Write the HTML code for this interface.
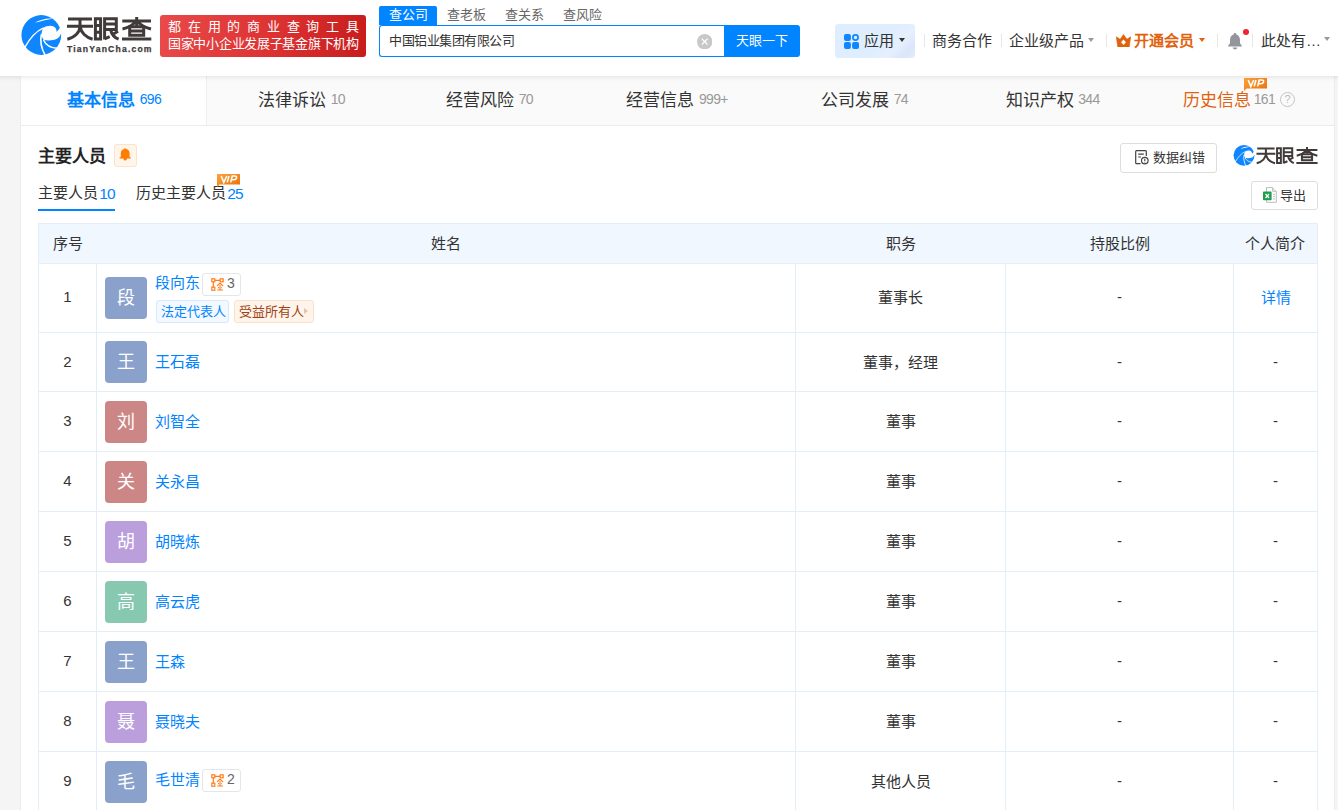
<!DOCTYPE html>
<html lang="zh-CN">
<head>
<meta charset="utf-8">
<title>中国铝业集团有限公司 - 天眼查</title>
<style>
*{box-sizing:border-box;margin:0;padding:0}
html,body{width:1338px;height:810px;overflow:hidden}
body{background:#f5f5f5;font-family:"Liberation Sans",sans-serif;color:#333;font-size:15px;font-weight:350;position:relative}
a{color:inherit;text-decoration:none}
i{font-style:normal}
.abs{position:absolute;white-space:nowrap;overflow:hidden}
.j{display:inline-block;text-align:justify;text-align-last:justify;white-space:nowrap}
.d{letter-spacing:-.8px}

/* ---------- header ---------- */
#hd{position:absolute;left:-20px;top:0;width:1378px;height:76px;background:#fff;box-shadow:0 1px 5px rgba(0,0,0,.10);z-index:5}
#hdi{position:absolute;left:20px;top:0;width:1338px;height:76px}
#logo{position:absolute;left:20px;top:14px;width:134px;height:42px}
#slogan{position:absolute;left:160px;top:15px;width:206px;height:42px;border-radius:3px;background:linear-gradient(100deg,#e94a4a 0%,#dc3232 55%,#c81c1c 100%);color:#fff;overflow:hidden}
#slogan div{position:absolute;white-space:nowrap;font-size:13px;line-height:16px;height:16px;text-align:justify;text-align-last:justify}
#stabs{position:absolute;left:379px;top:6px;height:19px}
#stabs a{position:absolute;top:0;height:19px;line-height:18px;font-size:13px;color:#666;white-space:nowrap;text-align:justify;text-align-last:justify}
#stabs a.on{background:#0084ff;color:#fff;border-radius:2px 2px 0 0;padding:0 9.5px}
#sbox{position:absolute;left:379px;top:25px;width:346px;height:32px;border:1px solid #0084ff;border-right:0;border-radius:3px 0 0 3px;background:#fff}
#sbox span.v{position:absolute;left:9px;top:0;line-height:30px;height:30px;font-size:13px;color:#333;white-space:nowrap}
#sclr{position:absolute;left:317px;top:7.5px;width:15.4px;height:15.4px}
#sbtn{position:absolute;left:724px;top:25px;width:76px;height:32px;background:#0084ff;color:#fff;font-size:13px;line-height:32px;text-align:center;border-radius:0 3px 3px 0;white-space:nowrap;overflow:hidden}
.nav{position:absolute;top:24px;height:33px;line-height:33px;font-size:15px;color:#333;white-space:nowrap}
.sep{position:absolute;top:34px;width:1px;height:13px;background:#e6e6e6}
.caret{position:absolute;width:0;height:0;border-left:3.5px solid transparent;border-right:3.5px solid transparent;border-top:4px solid #999}

/* ---------- tab bar ---------- */
#tabs{position:absolute;left:20px;top:76px;width:1315px;height:50px;background:#fafafa}
#tabs .t{position:absolute;top:0;height:49px;line-height:50px;padding-left:1px;text-align:center;font-size:17px;color:#333;white-space:nowrap}
#tabs .t .n{font-size:14px;color:#999;letter-spacing:-.7px;position:relative;top:-2px}
#tabs .t.on{background:#fff;color:#0084ff;font-weight:bold;box-shadow:inset -1px 0 0 #efefef}
#tabs .t.on .n{color:#0084ff;font-weight:350}
#tabs .t.vip{color:#e0620d}
#tabs .ln{position:absolute;background:#ececec}
.vip{position:absolute;width:23px;height:13px}
.q{position:absolute;width:15px;height:15px;border:1px solid #c4c4c4;border-radius:50%;color:#bbb;font-size:11px;line-height:13px;text-align:center}

/* ---------- card ---------- */
#card{position:absolute;left:20px;top:126px;width:1315px;height:700px;background:#fff;box-shadow:inset 1px 0 0 #ececec,inset -1px 0 0 #ececec}
#tt{position:absolute;left:18px;top:19px;font-size:17px;line-height:24px;height:24px;font-weight:bold;color:#222;white-space:nowrap}
#bell2{position:absolute;left:94px;top:18px;width:23px;height:23px;border:1px solid #ffe3c8;background:#fff5ea;border-radius:3px}
#fix{position:absolute;left:1100px;top:17px;width:97px;height:30px;border:1px solid #ddd;border-radius:3px;font-size:13px;line-height:28px;color:#333;white-space:nowrap}
#exp{position:absolute;left:1231px;top:55px;width:67px;height:29px;border:1px solid #ddd;border-radius:3px;font-size:13px;line-height:27px;color:#333;white-space:nowrap}
.st{position:absolute;top:57px;height:20px;line-height:20px;font-size:15px;color:#333;white-space:nowrap}
.st b{font-weight:inherit;color:#0084ff;letter-spacing:-.7px;font-size:15.5px;margin-left:-3px;position:relative;top:.5px}
#stline{position:absolute;left:18px;top:83px;width:77px;height:2px;background:#0084ff}

/* ---------- table ---------- */
#tb{position:absolute;left:18px;top:97px;width:1279px;border-collapse:collapse;table-layout:fixed;font-size:15px;color:#333}
#tb th{height:40px;background:#f0f7ff;font-weight:inherit;text-align:center;border:1px solid #e4eef6;border-left:0;border-right:0;white-space:nowrap;padding:0 0 2px}
#tb th:first-child{border-left:1px solid #e4eef6}
#tb th:last-child{border-right:1px solid #e4eef6}
#tb td{height:60px;border:1px solid #e4eef6;text-align:center;white-space:nowrap;padding:0 0 2px;position:relative}
#tb tr.r1 td{height:69px;padding-bottom:3px}
#tb tr.r2 td{height:59px}
#tb td.nm{text-align:left}
.av{position:absolute;left:8px;top:9px;width:42px;height:42px;border-radius:4px;color:#fff;font-size:18px;line-height:42px;text-align:center;overflow:hidden}
.pn{position:absolute;left:58px;top:19px;height:22px;line-height:22px;color:#0084ff;font-size:15px;white-space:nowrap}
.c1{background:#8aa1cc}.c2{background:#cc8686}.c3{background:#bb9edc}.c4{background:#87c9b0}
.cnt{position:absolute;height:23px;border:1px solid #e3e7ec;border-radius:3px;background:#fff;font-size:14px;line-height:21px;color:#666;white-space:nowrap}
.cnt svg{position:absolute;left:8px;top:4px}
.cnt span{position:absolute;left:24px;top:-1px}
.tag{position:absolute;top:36px;height:23px;border-radius:3px;font-size:13px;line-height:21px;white-space:nowrap}
</style>
</head>
<body>
<div id="hd"><div id="hdi">
  <div id="logo"><svg width="134" height="42" viewBox="0 0 134 42" style="position:absolute;left:0;top:0;overflow:visible">
    <g transform="translate(-4,-4) scale(0.0617284)">
      <circle cx="410" cy="405" r="322" fill="#0d86ff"/>
      <path d="M440,290 C500,250 600,240 640,292 C652,310 660,335 657,358 C670,338 692,318 708,292 L770,292 L770,384 L728,384 C700,470 620,505 450,488 C425,450 415,420 412,400 C415,350 425,320 440,290 Z" fill="#fff"/>
      <path d="M446,288 C330,340 220,460 140,610" fill="none" stroke="#fff" stroke-width="22"/>
      <path d="M412,392 C385,500 410,620 475,740" fill="none" stroke="#fff" stroke-width="26"/>
      <path d="M445,485 C480,560 560,615 670,618" fill="none" stroke="#fff" stroke-width="24"/>
      <path d="M303,208 C390,150 520,125 594,140 C500,152 400,182 303,208Z" fill="#fff"/>
    </g>
    <g fill="none" stroke="#403a3a" stroke-width="3.0">
      <path d="M48,5 H72 M47,12.3 H73 M60,5 V12.3 C60,18 55,23.5 47.3,25.2 M60.2,13 C61,18.5 66,23.5 72.6,25.2"/>
      <path d="M75.4,4.7 H80.6 V25 H75.4 Z M75.4,11.4 H80.6 M75.4,18.2 H80.6"/>
      <path d="M84.6,25.6 V4.7 H96.3 V15.4 H84.6 M84.6,10 H96.3 M90.5,15.4 C91.5,20 94,23.5 98.6,25.2 M98,17.2 L92.5,20.5 M84.6,24.8 L89.7,22.6"/>
      <path d="M102.3,7 H131 M116.7,3 V12 M115.5,8 C112,11.5 107,14 102.5,15 M117.9,8 C121.5,11.5 126.5,14 131,15"/>
      <path d="M109.7,12.8 H123.7 V21.2 H109.7 Z M109.7,17 H123.7 M102,25 H131.3"/>
    </g>
    <text x="47" y="37.6" font-family="Liberation Sans, sans-serif" font-weight="bold" font-size="8.6" fill="#403a3a" stroke="#403a3a" stroke-width="0.25" textLength="84.5" lengthAdjust="spacing">TianYanCha.com</text>
  </svg></div>
  <div id="slogan">
    <div style="left:8px;top:4px;width:191px">都在用的商业查询工具</div>
    <div style="left:8px;top:21px;width:190.5px;letter-spacing:-.5px">国家中小企业发展子基金旗下机构</div>
  </div>
  <div id="stabs">
    <a class="on" style="left:0;width:58px">查公司</a>
    <a style="left:68px;width:39px">查老板</a>
    <a style="left:126px;width:39px">查关系</a>
    <a style="left:184px;width:39px">查风险</a>
  </div>
  <div id="sbox"><span class="v"><span class="j" style="width:125.5px;letter-spacing:-0.45px">中国铝业集团有限公司</span></span><svg id="sclr" viewBox="0 0 16 16"><circle cx="8" cy="8" r="8" fill="#c8c8c8"/><path d="M5,5 L11,11 M11,5 L5,11" stroke="#fff" stroke-width="1.3"/></svg></div>
  <div id="sbtn"><span class="j" style="width:52px">天眼一下</span></div>
  <div class="abs" style="left:835px;top:24px;width:80px;height:34px;border-radius:3px;background:linear-gradient(135deg,#dfeeff 0%,#dfeeff 58%,#e6effd 74%,#dce6fb 88%,#e2ecfd 100%)"></div>
  <svg class="abs" style="left:844px;top:33.6px" width="15" height="15" viewBox="0 0 15 15"><rect x="0" y="0" width="6.9" height="6.9" rx="2" fill="#0d86ff"/><rect x="0" y="8.1" width="6.9" height="6.9" rx="2" fill="#0d86ff"/><rect x="8.1" y="8.1" width="6.9" height="6.9" rx="2" fill="#0d86ff"/><circle cx="11.5" cy="3.5" r="2.6" fill="none" stroke="#0d86ff" stroke-width="1.7"/></svg>
  <div class="nav" style="left:864px"><span class="j" style="width:30px">应用</span></div>
  <i class="caret" style="left:899px;top:38px;border-top-color:#333"></i>
  <i class="sep" style="left:924px"></i>
  <div class="nav" style="left:932px"><span class="j" style="width:60px">商务合作</span></div>
  <i class="sep" style="left:1001px"></i>
  <div class="nav" style="left:1009px"><span class="j" style="width:75px">企业级产品</span></div>
  <i class="caret" style="left:1088px;top:38px"></i>
  <i class="sep" style="left:1106px"></i>
  <svg class="abs" style="left:1116px;top:33.5px" width="15" height="13.9" viewBox="0 0 14 13"><path d="M0.3,2.6 L3.8,5 L7,0.5 L10.2,5 L13.7,2.6 L12.3,12.3 H1.7 Z" fill="#e0620d" stroke="#e0620d" stroke-width="0.6" stroke-linejoin="round"/><path d="M7,5.2 L9.3,7.8 L7,10.4 L4.7,7.8Z" fill="#fff"/></svg>
  <div class="nav" style="left:1134px;color:#e0620d;font-weight:bold"><span class="j" style="width:60px">开通会员</span></div>
  <i class="caret" style="left:1199px;top:38px;border-top-color:#e0620d"></i>
  <i class="sep" style="left:1217px"></i>
  <svg class="abs" style="left:1227px;top:32px" width="16" height="17.8" viewBox="0 0 18 20"><path d="M9,1.2 C9.9,1.2 10.5,1.8 10.5,2.7 C13.2,3.5 14.6,5.8 14.6,8.8 V12.6 L16.6,15.2 V16.2 H1.4 V15.2 L3.4,12.6 V8.8 C3.4,5.8 4.8,3.5 7.5,2.7 C7.5,1.8 8.1,1.2 9,1.2 Z" fill="#92959b"/><path d="M6.4,17.5 H11.6 C11.3,18.9 10.3,19.6 9,19.6 C7.7,19.6 6.7,18.9 6.4,17.5Z" fill="#92959b"/></svg>
  <i class="abs" style="left:1243px;top:29px;width:6px;height:6px;border-radius:50%;background:#f5222d"></i>
  <i class="sep" style="left:1252px"></i>
  <div class="nav" style="left:1261px"><span class="j" style="width:45px">此处有</span>…</div>
  <i class="caret" style="left:1324px;top:37px"></i>
</div></div>

<div id="tabs">
  <div class="t on" style="left:0px;width:187px"><span class="j" style="width:68px">基本信息</span> <span class="n">696</span></div>
  <div class="t" style="left:187px;width:188px"><span class="j" style="width:68px">法律诉讼</span> <span class="n">10</span></div>
  <div class="t" style="left:375px;width:188px"><span class="j" style="width:68px">经营风险</span> <span class="n">70</span></div>
  <div class="t" style="left:563px;width:187px"><span class="j" style="width:68px">经营信息</span> <span class="n">999+</span></div>
  <div class="t" style="left:750px;width:188px"><span class="j" style="width:68px">公司发展</span> <span class="n">74</span></div>
  <div class="t" style="left:938px;width:188px"><span class="j" style="width:68px">知识产权</span> <span class="n">344</span></div>
  <div class="t vip" style="left:1126px;width:186px;text-align:left;padding-left:37px"><span class="j" style="width:68px">历史信息</span> <span class="n" style="margin-left:-2px">161</span></div>
  <i class="q" style="left:1260px;top:16px">?</i>
  <svg class="vip" style="left:1224px;top:2px" viewBox="0 0 23 13"><defs><linearGradient id="vg1" x1="0" y1="0" x2="1" y2="1"><stop offset="0" stop-color="#ffa336"/><stop offset="1" stop-color="#e96f0a"/></linearGradient></defs><path d="M0,0 H23 V10.4 H2.6 L0,13 Z" fill="url(#vg1)"/><path d="M4.2,2 L6.8,8.4 L9.8,2 M12,2 L10.2,8.4 M13.6,8.4 L15.3,2 H17.8 Q20,2 19.5,4 Q19,5.8 16.6,5.8 H14.6" fill="none" stroke="#fff" stroke-width="1.6"/></svg>
  <i class="ln" style="left:0;top:0;width:1px;height:50px"></i><i class="ln" style="left:1314px;top:0;width:1px;height:50px"></i><i class="ln" style="left:0;top:49px;width:1315px;height:1px"></i>
</div>

<div id="card">
  <div id="tt"><span class="j" style="width:68px">主要人员</span></div>
  <div id="bell2"><svg width="12" height="13" viewBox="0 0 12 13" style="position:absolute;left:4px;top:3px"><path d="M6.2,0.3 C6.8,0.3 7.1,0.6 7.2,1 C9.4,1.5 10.6,3.2 10.6,5.4 V9 L11.8,9.6 V10.6 H0.6 V9.6 L1.8,9 V5.4 C1.8,3.2 3,1.5 5.2,1 C5.3,0.6 5.6,0.3 6.2,0.3Z M4.4,10.4 H8 C7.8,11.8 7.1,12.4 6.2,12.4 C5.3,12.4 4.6,11.8 4.4,10.4Z" fill="#ff7d00"/></svg></div>
  <div id="fix"><svg width="14" height="15" viewBox="0 0 14 15" style="position:absolute;left:14px;top:6px"><path d="M5.5,13.6 H1.6 Q0.7,13.6 0.7,12.7 V1.6 Q0.7,0.7 1.6,0.7 H10.4 Q11.3,0.7 11.3,1.6 V6" fill="none" stroke="#444" stroke-width="1.2"/><path d="M3.2,4.2 H8.8 M3.2,7 H6" stroke="#444" stroke-width="1.2"/><circle cx="9.8" cy="10.6" r="3.3" fill="#fff" stroke="#444" stroke-width="1.2"/><path d="M9.8,8.8 V11 M9.8,11.8 V12.6" stroke="#444" stroke-width="1.1"/></svg><span style="position:absolute;left:32px;top:0"><span class="j" style="width:52px">数据纠错</span></span></div>
  <svg width="86" height="24" viewBox="0 0 86 24" style="position:absolute;left:1213px;top:18px;overflow:visible">
    <g transform="translate(-2.3,-1.8) scale(0.0325)">
      <circle cx="410" cy="405" r="322" fill="#0d86ff"/>
      <path d="M440,290 C500,250 600,240 640,292 C652,310 660,335 657,358 C670,338 692,318 708,292 L770,292 L770,384 L728,384 C700,470 620,505 450,488 C425,450 415,420 412,400 C415,350 425,320 440,290 Z" fill="#fff"/>
      <path d="M446,288 C330,340 220,460 140,610" fill="none" stroke="#fff" stroke-width="22"/>
      <path d="M412,392 C385,500 410,620 475,740" fill="none" stroke="#fff" stroke-width="26"/>
      <path d="M445,485 C480,560 560,615 670,618" fill="none" stroke="#fff" stroke-width="24"/>
      <path d="M303,208 C390,150 520,125 594,140 C500,152 400,182 303,208Z" fill="#fff"/>
    </g>
    <g transform="translate(-10.6,0.9) scale(0.725)"><g fill="none" stroke="#403a3a" stroke-width="2.75">
      <path d="M48,5 H72 M47,12.3 H73 M60,5 V12.3 C60,18 55,23.5 47.3,25.2 M60.2,13 C61,18.5 66,23.5 72.6,25.2"/>
      <path d="M75.4,4.7 H80.6 V25 H75.4 Z M75.4,11.4 H80.6 M75.4,18.2 H80.6"/>
      <path d="M84.6,25.6 V4.7 H96.3 V15.4 H84.6 M84.6,10 H96.3 M90.5,15.4 C91.5,20 94,23.5 98.6,25.2 M98,17.2 L92.5,20.5 M84.6,24.8 L89.7,22.6"/>
      <path d="M102.3,7 H131 M116.7,3 V12 M115.5,8 C112,11.5 107,14 102.5,15 M117.9,8 C121.5,11.5 126.5,14 131,15"/>
      <path d="M109.7,12.8 H123.7 V21.2 H109.7 Z M109.7,17 H123.7 M102,25 H131.3"/>
    </g></g>
  </svg>
  <div class="st" style="left:18px"><span class="j" style="width:60px">主要人员</span> <b>10</b></div>
  <div class="st" style="left:116px"><span class="j" style="width:90px">历史主要人员</span> <b>25</b></div>
  <div id="stline"></div>
  <svg class="vip" style="left:197px;top:48px" viewBox="0 0 23 13"><defs><linearGradient id="vg2" x1="0" y1="0" x2="1" y2="1"><stop offset="0" stop-color="#ffa336"/><stop offset="1" stop-color="#e96f0a"/></linearGradient></defs><path d="M0,0 H23 V10.4 H2.6 L0,13 Z" fill="url(#vg2)"/><path d="M4.2,2 L6.8,8.4 L9.8,2 M12,2 L10.2,8.4 M13.6,8.4 L15.3,2 H17.8 Q20,2 19.5,4 Q19,5.8 16.6,5.8 H14.6" fill="none" stroke="#fff" stroke-width="1.6"/></svg>
  <div id="exp"><svg width="14" height="16" viewBox="0 0 14 16" style="position:absolute;left:11px;top:5px"><path d="M3.5,0.6 H9.6 L13.3,4.3 V15.3 H3.5 Z" fill="#fff" stroke="#bdbdbd" stroke-width="1"/><path d="M9.6,0.6 V4.3 H13.3" fill="#eee" stroke="#bdbdbd" stroke-width="1"/><path d="M10,7.3 H12 M10,9.6 H12 M10,11.9 H12" stroke="#bdbdbd" stroke-width="1"/><rect x="0" y="4.6" width="8.6" height="8.6" rx="0.8" fill="#1d9d4f"/><path d="M2.5,6.8 L6.1,11 M6.1,6.8 L2.5,11" stroke="#fff" stroke-width="1.3"/></svg><span style="position:absolute;left:28px;top:0"><span class="j" style="width:26px">导出</span></span></div>

  <table id="tb">
    <colgroup><col style="width:58px"><col style="width:699px"><col style="width:210px"><col style="width:228px"><col style="width:84px"></colgroup>
    <tr><th style="text-align:left;padding-left:14px"><span class="j" style="width:30px">序号</span></th><th><span class="j" style="width:30px">姓名</span></th><th><span class="j" style="width:30px">职务</span></th><th><span class="j" style="width:60px">持股比例</span></th><th><span class="j" style="width:60px">个人简介</span></th></tr>
    <tr class="r1"><td>1</td><td class="nm"><div class="av c1" style="top:13px">段</div><a class="pn" style="top:8px"><span class="j" style="width:45px">段向东</span></a><div class="cnt" style="left:105px;top:9px;width:39px"><svg width="13" height="13" viewBox="0 0 13 13"><g fill="none" stroke="#ff7d1a" stroke-width="1.2"><rect x="0.8" y="0.8" width="3" height="3"/><rect x="0.8" y="9.2" width="3" height="3"/><rect x="9.2" y="0.8" width="3" height="3"/><path d="M2.3,3.8 V9.2 M3.8,2.3 H9.2"/></g><path d="M9,5 L6,8.2 M9,5 L12.2,8.2 M9,7 V12 M6.3,12 H12 M7,9.6 H8 M10.2,9.6 H11" fill="none" stroke="#ff7d1a" stroke-width="1.1"/></svg><span>3</span></div><div class="tag" style="left:59px;width:73px;background:#f3f9ff;border:1px solid #d4e9ff;color:#0084ff;padding-left:3.5px"><span class="j" style="width:65px">法定代表人</span></div><div class="tag" style="left:137px;width:80px;background:#fff4ea;border:1px solid #fbe0cb;color:#9c4317;padding-left:4px"><span class="j" style="width:65px">受益所有人</span><i style="position:absolute;left:69px;top:7px;width:0;height:0;border-top:3.5px solid transparent;border-bottom:3.5px solid transparent;border-left:4px solid #ebc0a3"></i></div></td><td><span class="j" style="width:45px">董事长</span></td><td>-</td><td><a style="color:#0084ff"><span class="j" style="width:30px">详情</span></a></td></tr>
    <tr class="r2"><td>2</td><td class="nm"><div class="av c1" style="top:8px">王</div><a class="pn" style="top:18px"><span class="j" style="width:45px">王石磊</span></a></td><td><span class="j" style="width:75px">董事，经理</span></td><td>-</td><td>-</td></tr>
    <tr><td>3</td><td class="nm"><div class="av c2">刘</div><a class="pn"><span class="j" style="width:45px">刘智全</span></a></td><td><span class="j" style="width:30px">董事</span></td><td>-</td><td>-</td></tr>
    <tr><td>4</td><td class="nm"><div class="av c2">关</div><a class="pn"><span class="j" style="width:45px">关永昌</span></a></td><td><span class="j" style="width:30px">董事</span></td><td>-</td><td>-</td></tr>
    <tr><td>5</td><td class="nm"><div class="av c3">胡</div><a class="pn"><span class="j" style="width:45px">胡晓炼</span></a></td><td><span class="j" style="width:30px">董事</span></td><td>-</td><td>-</td></tr>
    <tr><td>6</td><td class="nm"><div class="av c4">高</div><a class="pn"><span class="j" style="width:45px">高云虎</span></a></td><td><span class="j" style="width:30px">董事</span></td><td>-</td><td>-</td></tr>
    <tr><td>7</td><td class="nm"><div class="av c1">王</div><a class="pn"><span class="j" style="width:30px">王森</span></a></td><td><span class="j" style="width:30px">董事</span></td><td>-</td><td>-</td></tr>
    <tr><td>8</td><td class="nm"><div class="av c3">聂</div><a class="pn"><span class="j" style="width:45px">聂晓夫</span></a></td><td><span class="j" style="width:30px">董事</span></td><td>-</td><td>-</td></tr>
    <tr><td>9</td><td class="nm"><div class="av c1">毛</div><a class="pn" style="top:17px"><span class="j" style="width:45px">毛世清</span></a><div class="cnt" style="left:105px;top:17px;width:39px"><svg width="13" height="13" viewBox="0 0 13 13"><g fill="none" stroke="#ff7d1a" stroke-width="1.2"><rect x="0.8" y="0.8" width="3" height="3"/><rect x="0.8" y="9.2" width="3" height="3"/><rect x="9.2" y="0.8" width="3" height="3"/><path d="M2.3,3.8 V9.2 M3.8,2.3 H9.2"/></g><path d="M9,5 L6,8.2 M9,5 L12.2,8.2 M9,7 V12 M6.3,12 H12 M7,9.6 H8 M10.2,9.6 H11" fill="none" stroke="#ff7d1a" stroke-width="1.1"/></svg><span>2</span></div></td><td><span class="j" style="width:60px">其他人员</span></td><td>-</td><td>-</td></tr>
  </table>
</div>

</body>
</html>
